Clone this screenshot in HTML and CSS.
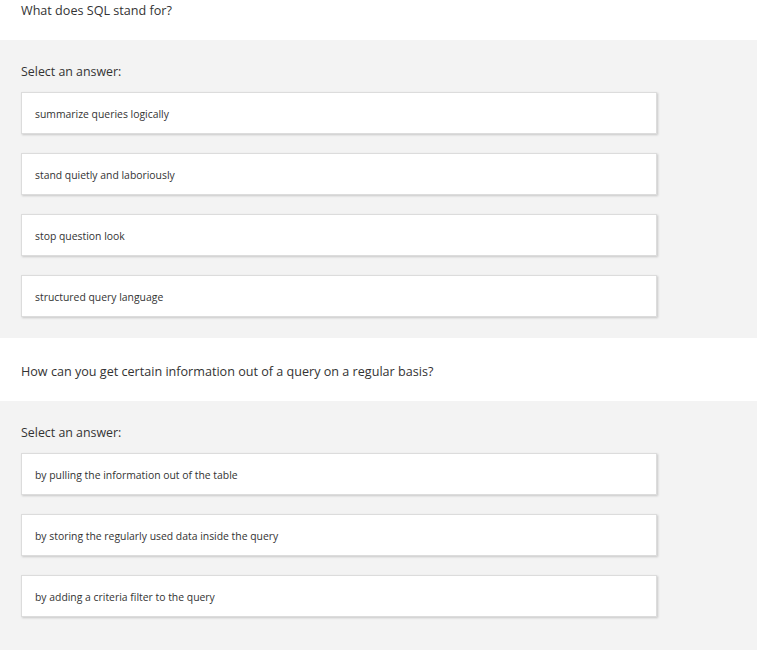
FILE: index.html
```html
<!DOCTYPE html>
<html lang="en">
<head>
  <meta charset="UTF-8">
  <meta name="viewport" content="width=device-width, initial-scale=1.0">
  <title>SQL Quiz</title>
  <link rel="stylesheet" href="styles.css">
</head>
<body>
  <div class="question first">
    <p>What does SQL stand for?</p>
  </div>
  <div class="answers">
    <p class="prompt">Select an answer:</p>
    <ul class="options">
      <li class="option">summarize queries logically</li>
      <li class="option">stand quietly and laboriously</li>
      <li class="option">stop question look</li>
      <li class="option">structured query language</li>
    </ul>
  </div>

  <div class="question">
    <p>How can you get certain information out of a query on a regular basis?</p>
  </div>
  <div class="answers">
    <p class="prompt">Select an answer:</p>
    <ul class="options">
      <li class="option">by pulling the information out of the table</li>
      <li class="option">by storing the regularly used data inside the query</li>
      <li class="option">by adding a criteria filter to the query</li>
    </ul>
  </div>
</body>
</html>
```

FILE: styles.css
```css
body {
  margin: 0;
  background: #f3f3f3;
  font-family: "Open Sans", "Noto Sans", sans-serif;
  color: #333;
}

p {
  margin: 0;
}

.question {
  background: #fff;
  padding: 25px 21px 20px;
  font-size: 12.6px;
  line-height: 18px;
}

.question.first {
  padding-top: 2px;
}

.answers {
  background: #f3f3f3;
  padding: 23px 100px 21px 21px;
}

.prompt {
  font-size: 12.4px;
  line-height: 18px;
  margin-bottom: 11px;
}

.options {
  list-style: none;
  margin: 0;
  padding: 0;
  display: flex;
  flex-direction: column;
  gap: 19px;
}

/* answer card: text sits a touch below centre */
.option {
  height: 38px;
  display: flex;
  align-items: center;
  padding: 2px 13px 0;
  background: #fff;
  border: 1px solid #dcdcdc;
  box-shadow: 1px 1px 2px rgba(0, 0, 0, 0.18);
  font-size: 10.4px;
  color: #333;
}
```
